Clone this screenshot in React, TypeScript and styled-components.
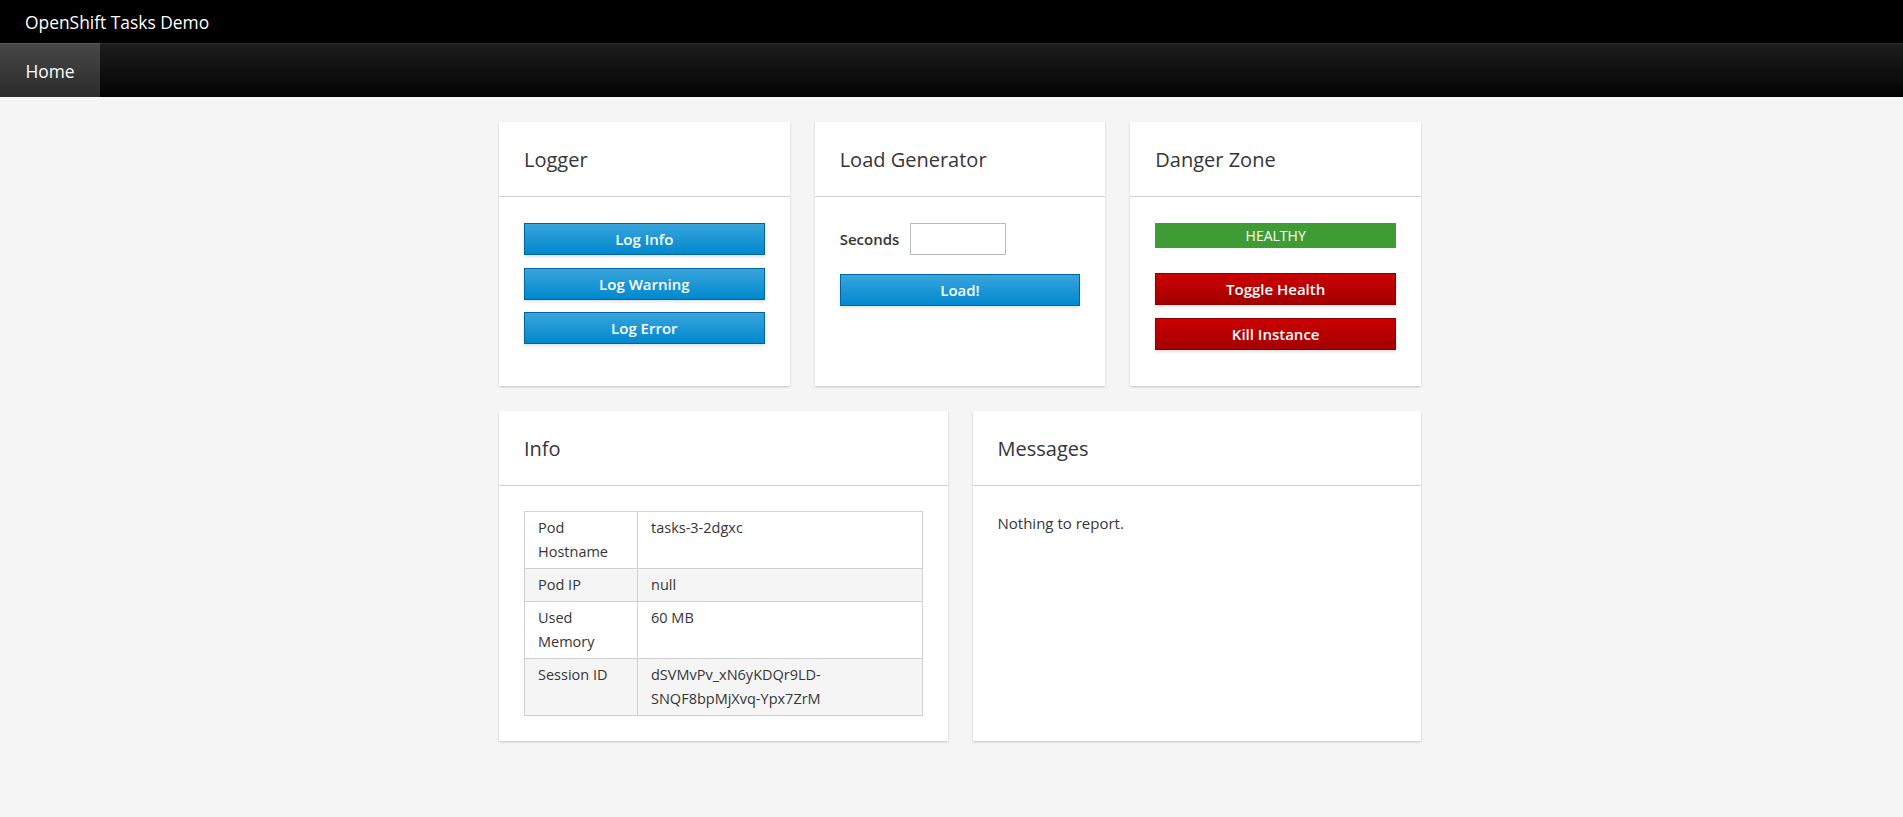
import styled, { createGlobalStyle, css } from "styled-components";

const GlobalStyle = createGlobalStyle`
  html, body {
    margin: 0;
    padding: 0;
    background: #f5f5f5;
    font-family: "Open Sans", "Liberation Sans", sans-serif;
    color: #363636;
    font-size: 14px;
  }
`;

const TopBar = styled.div`
  height: 43px;
  background: #000;
  display: flex;
  align-items: center;
  padding-left: 25px;
  color: #fff;
  font-size: 17.4px;
  box-sizing: border-box;
`;

const NavBar = styled.div`
  height: 54px;
  display: flex;
  background: linear-gradient(to bottom, #1d1d1d 0, #030303 100%);
  border-top: 1px solid #2a2a2a;
  box-sizing: border-box;
`;

const NavItem = styled.div<{ $active?: boolean }>`
  width: 100px;
  display: flex;
  align-items: center;
  justify-content: center;
  color: #fff;
  font-size: 17.4px;
  ${({ $active }) =>
    $active &&
    css`
      background: linear-gradient(to bottom, #474747 0, #2b2b2b 100%);
      border-top: 1px solid #5a5a5a;
      margin-top: -1px;
    `}
`;

const Main = styled.main`
  display: flex;
  justify-content: center;
  padding: 25px 0 40px 17px;
`;

const Container = styled.div`
  width: 922px;
  display: flex;
  flex-direction: column;
  gap: 25px;
`;

const Row = styled.div<{ $cols: number }>`
  display: grid;
  grid-template-columns: repeat(${({ $cols }) => $cols}, 1fr);
  column-gap: 25px;
`;

const Card = styled.section<{ $height: number }>`
  background: #fff;
  box-shadow: 0 1px 2px rgba(3, 3, 3, 0.2);
  height: ${({ $height }) => $height}px;
  box-sizing: border-box;
`;

const CardHeader = styled.div`
  height: 75px;
  border-bottom: 1px solid #d1d1d1;
  padding: 0 25px;
  display: flex;
  align-items: center;
  box-sizing: border-box;
`;

const CardTitle = styled.h2`
  margin: 0;
  font-size: 20px;
  font-weight: 400;
  color: #363636;
`;

const CardBody = styled.div<{ $top?: number }>`
  padding: ${({ $top = 25 }) => $top}px 25px 25px;
  display: flex;
  flex-direction: column;
`;

const Button = styled.button<{ $variant: "primary" | "danger" }>`
  height: 32px;
  width: 100%;
  font-family: inherit;
  font-size: 15px;
  font-weight: 600;
  color: #fff;
  cursor: pointer;
  box-shadow: 0 2px 3px rgba(3, 3, 3, 0.12);
  ${({ $variant }) =>
    $variant === "primary"
      ? css`
          background: linear-gradient(to bottom, #39a5dc 0, #0088ce 100%);
          border: 1px solid #00659c;
        `
      : css`
          background: linear-gradient(to bottom, #cc0000 0, #a30000 100%);
          border: 1px solid #8b0000;
        `}
  & + & {
    margin-top: 12.5px;
  }
`;

const FormRow = styled.div`
  display: flex;
  align-items: center;
  margin-bottom: 19px;
`;

const Label = styled.label`
  font-weight: 600;
  font-size: 15px;
  margin-right: 11px;
`;

const TextInput = styled.input`
  width: 96px;
  height: 32px;
  box-sizing: border-box;
  border: 1px solid #bbb;
  font-family: inherit;
  font-size: 14px;
  padding: 2px 6px;
`;

const StatusBadge = styled.div`
  height: 25px;
  background: #3f9c35;
  color: #fff;
  display: flex;
  align-items: center;
  justify-content: center;
  font-size: 14px;
  margin-bottom: 25px;
`;

const InfoTable = styled.table`
  width: 100%;
  border-collapse: collapse;
  border: 1px solid #d1d1d1;
  font-size: 14.5px;
  line-height: 24px;
`;

const Tr = styled.tr<{ $shaded?: boolean }>`
  background: ${({ $shaded }) => ($shaded ? "#f5f5f5" : "#fff")};
`;

const Td = styled.td<{ $key?: boolean }>`
  border: 1px solid #d1d1d1;
  padding: 4px 13px 4px;
  vertical-align: top;
  width: ${({ $key }) => ($key ? "86px" : "auto")};
`;

const Text = styled.p`
  margin: 0;
  font-size: 15px;
  line-height: 24px;
`;

const infoRows = [
  ["Pod Hostname", "tasks-3-2dgxc"],
  ["Pod IP", "null"],
  ["Used Memory", "60 MB"],
  ["Session ID", "dSVMvPv_xN6yKDQr9LD-SNQF8bpMjXvq-Ypx7ZrM"],
];

export default function App() {
  return (
    <>
      <GlobalStyle />
      <TopBar>OpenShift Tasks Demo</TopBar>
      <NavBar>
        <NavItem $active>Home</NavItem>
      </NavBar>
      <Main>
        <Container>
          <Row $cols={3}>
            <Card $height={264}>
              <CardHeader>
                <CardTitle>Logger</CardTitle>
              </CardHeader>
              <CardBody $top={26}>
                <Button $variant="primary">Log Info</Button>
                <Button $variant="primary">Log Warning</Button>
                <Button $variant="primary">Log Error</Button>
              </CardBody>
            </Card>
            <Card $height={264}>
              <CardHeader>
                <CardTitle>Load Generator</CardTitle>
              </CardHeader>
              <CardBody $top={26}>
                <FormRow>
                  <Label>Seconds</Label>
                  <TextInput type="text" />
                </FormRow>
                <Button $variant="primary">Load!</Button>
              </CardBody>
            </Card>
            <Card $height={264}>
              <CardHeader>
                <CardTitle>Danger Zone</CardTitle>
              </CardHeader>
              <CardBody $top={26}>
                <StatusBadge>HEALTHY</StatusBadge>
                <Button $variant="danger">Toggle Health</Button>
                <Button $variant="danger">Kill Instance</Button>
              </CardBody>
            </Card>
          </Row>
          <Row $cols={2}>
            <Card $height={330}>
              <CardHeader>
                <CardTitle>Info</CardTitle>
              </CardHeader>
              <CardBody>
                <InfoTable>
                  <tbody>
                    {infoRows.map(([k, v], i) => (
                      <Tr key={k} $shaded={i % 2 === 1}>
                        <Td $key>{k}</Td>
                        <Td>{v}</Td>
                      </Tr>
                    ))}
                  </tbody>
                </InfoTable>
              </CardBody>
            </Card>
            <Card $height={330}>
              <CardHeader>
                <CardTitle>Messages</CardTitle>
              </CardHeader>
              <CardBody>
                <Text>Nothing to report.</Text>
              </CardBody>
            </Card>
          </Row>
        </Container>
      </Main>
    </>
  );
}
